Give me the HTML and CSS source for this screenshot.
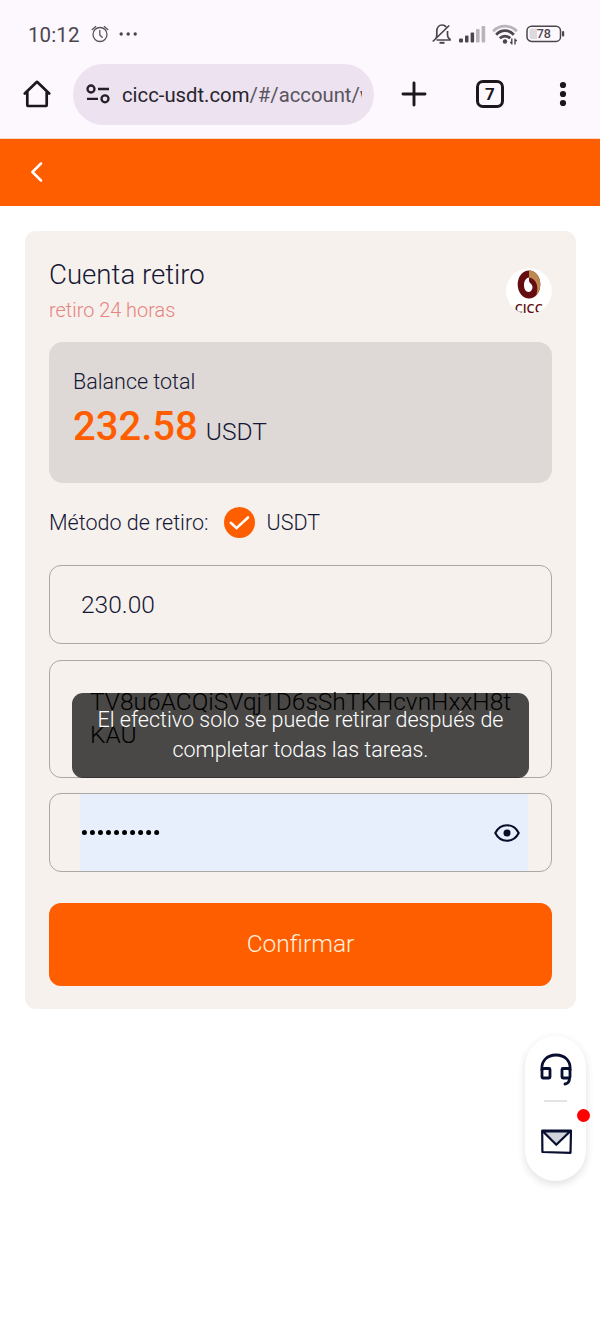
FILE: index.html
```html
<!DOCTYPE html>
<html lang="es">
<head>
<meta charset="utf-8">
<title>Cuenta retiro</title>
<link rel="stylesheet" href="styles.css">
</head>
<body>
<header class="chrome">
  <div class="status">
    <span class="clock">10:12</span>
    <svg class="alarm" width="18" height="18" viewBox="0 0 18 18" fill="none" stroke="#58535b" stroke-width="1.3"><circle cx="9" cy="9.5" r="7"/><path d="M8.8 5v5l2.8 2.8M.8 5 5 1.2M17.2 5 13 1.2"/></svg>
    <svg class="more" width="19" height="4" viewBox="0 0 19 4" fill="#4b464e"><circle cx="2.2" cy="2" r="1.7"/><circle cx="9.2" cy="2" r="1.7"/><circle cx="16.2" cy="2" r="1.7"/></svg>
    <div class="signals">
      <svg width="20" height="22" viewBox="0 0 20 22" fill="none" stroke="#4b464e" stroke-width="1.7"><path d="M3.5 16c1-1 1.300-2 1.300-4V8.500C4.800 4.500 7 2 10 2c2 0 3.300.8 4.200 2M15.500 8v4c0 2 .5 3 2.500 4.300v.7H4.500M.8 18.500 17.200 2.500"/><path d="M7.500 19.800h5" stroke-width="2"/></svg>
      <svg class="bars" width="27" height="18" viewBox="0 0 27 18"><g fill="#4b464e"><rect y="13.500" width="4" height="4" rx="1"/><rect x="6" y="10.500" width="3.500" height="7" rx="1"/><rect x="11.600" y="7.500" width="3.500" height="10" rx="1"/></g><g fill="#b9b3bb"><rect x="17" y="4" width="3.600" height="13.500" rx="1"/><rect x="22.600" y="1" width="3.600" height="16.500" rx="1"/></g></svg>
      <svg class="wifi" width="26" height="21" viewBox="0 0 26 21" fill="none" stroke-width="2.800"><path d="M1.200 7.300C7.500.5 18.500.5 24.800 7.300" stroke="#b9b3bb"/><path d="M4.200 10.700c5-5.400 12.600-5.400 17.600 0M7.800 14.300c3-3 7.400-3 10.400 0" stroke="#4b464e"/><circle cx="13" cy="17.500" r="2.200" fill="#4b464e"/><path d="M19.800 14.500v6M23 14.500v6M18 18.500h2M23 16.500h2" stroke="#4b464e" stroke-width="1.400"/></svg>
      <svg width="39" height="18" viewBox="0 0 39 18"><rect x="1" y="1.200" width="33.500" height="15.200" rx="4.500" fill="none" stroke="#4b464e" stroke-width="1.500"/><path d="M6 3.500h5v10.500H6q-2.500 0-2.500-2.500V6Q3.500 3.500 6 3.500z" fill="#ded8df"/><rect x="36" y="6" width="2.200" height="5.500" rx="1" fill="#4b464e"/><text x="17.800" y="13.200" text-anchor="middle" class="charge">78</text></svg>
    </div>
  </div>
  <div class="toolbar">
    <svg class="home" width="28" height="28" viewBox="0 0 28 28" fill="none" stroke="#1c171e" stroke-width="2.700" stroke-linejoin="round" stroke-linecap="round"><path d="M1.800 13.500 14 1.800l12.200 11.700M4.300 12v12.700q0 1.300 1.300 1.300h16.800q1.300 0 1.300-1.300V12"/></svg>
    <div class="address">
      <svg width="24" height="20" viewBox="0 0 24 20" fill="none" stroke="#252027" stroke-width="2.300"><circle cx="5" cy="5" r="3.500"/><path d="M12 5h11M1 14.800h11"/><circle cx="19" cy="14.800" r="3.500"/></svg>
      <div class="url">cicc-usdt.com<span class="path">/#/account/w</span></div>
    </div>
    <svg class="plus" width="26" height="26" viewBox="0 0 26 26" stroke="#1c171e" stroke-width="2.900" stroke-linecap="round"><path d="M13 2v22M2 13h22"/></svg>
    <div class="tabs">7</div>
    <svg class="dots" width="8" height="26" viewBox="0 0 8 26" fill="#1c171e"><circle cx="4" cy="4" r="3.100"/><circle cx="4" cy="13" r="3.100"/><circle cx="4" cy="22" r="3.100"/></svg>
  </div>
</header>
<nav class="navbar">
  <svg width="13" height="20" viewBox="0 0 13 20" fill="none" stroke="#fff" stroke-width="2.500" stroke-linecap="round" stroke-linejoin="round"><path d="M11 1.500 2.400 10l8.600 8.500"/></svg>
</nav>
<main class="card">
  <div class="heading">
    <div>
      <h1 class="title">Cuenta retiro</h1>
      <p class="subtitle">retiro 24 horas</p>
    </div>
    <svg class="logo" width="46" height="46" viewBox="0 0 46 46"><circle cx="23" cy="23" r="23" fill="#fff"/><ellipse cx="23" cy="16.500" rx="11.300" ry="14" fill="#650d10"/><path d="M23 2.500c6.500 0 11.300 6 11.300 14 0 4.500-1.500 8-4 10.500 2.500-8 .7-16-7.300-17.500z" fill="#bd8850"/><path d="M23 9.500v3.500c.5 2.500 3.500 3 3.500 6 0 2.800-1.800 5-4 5-2.800 0-4.500-3-4.500-7 0-4 2-7 5-7.500z" fill="#fff"/><text x="22.700" y="44.500" text-anchor="middle" textLength="28" lengthAdjust="spacingAndGlyphs" class="brand">CICC</text></svg>
  </div>
  <section class="balance">
    <div class="label">Balance total</div>
    <div class="amount"><strong>232.58</strong><span>USDT</span></div>
  </section>
  <div class="method">
    <span>Método de retiro:</span>
    <svg width="31" height="31" viewBox="0 0 31 31"><circle cx="15.500" cy="15.500" r="15.500" fill="#ff5e00"/><path d="m6.800 15.800 5.700 5.300L24 10.500" fill="none" stroke="#fff" stroke-width="2.600" stroke-linecap="round"/></svg>
    <span>USDT</span>
  </div>
  <div class="field sum">230.00</div>
  <div class="field wallet"><span class="wallet-text">TV8u6ACQiSVqj1D6sShTKHcvnHxxH8t<br>KAU</span>
    <div class="toast">El efectivo solo se puede retirar después de<br>completar todas las tareas.</div>
  </div>
  <div class="field password">
    <div class="autofill">
      <svg width="80" height="8" viewBox="0 0 80 8" fill="none"><path d="M4.400 3.500h73" stroke="#000" stroke-width="5" stroke-linecap="round" stroke-dasharray="0 8.030"/></svg>
      <svg width="26" height="18" viewBox="0 0 26 18" fill="none" stroke="#080c2b" stroke-width="2.100"><path d="M1.300 9C6.500-1.300 19.500-1.300 24.700 9 19.500 19.300 6.500 19.300 1.300 9z"/><circle cx="13" cy="9" r="3.500" fill="#080c2b" stroke="none"/></svg>
    </div>
  </div>
  <div class="confirm">Confirmar</div>
</main>
<aside class="support">
  <svg width="32" height="34" viewBox="0 0 32 34" fill="none" stroke="#080e30" stroke-width="2.800" stroke-linecap="round" stroke-linejoin="round"><path d="M2 17C1 8 7 2 16 2s15 6 14 15"/><rect x="2" y="15.500" width="8" height="9.500" rx="1"/><rect x="22" y="15.500" width="8" height="9.500" rx="1"/><path d="M29.500 25.500c0 3-1.500 5-4.500 5.500"/></svg>
  <i class="divider"></i>
  <svg width="32" height="25" viewBox="0 0 32 25" fill="none" stroke="#080e30" stroke-width="2.200" stroke-linejoin="round"><path d="M2.200 1.500 31 1.700 30.500 23.800 2.400 23z"/><path d="M3 2.500 16.300 15.800 30 2.500z" fill="#d1d2da"/></svg>
  <i class="unread"></i>
</aside>
</body>
</html>
```
FILE: styles.css
```css
* { box-sizing: border-box; }
body { margin: 0; background: #fff; color: #141735; font-family: Roboto, sans-serif; font-weight: 300; height: 1333px; overflow: hidden; }
svg { display: block; flex: none; }
h1, p { margin: 0; font-weight: 300; }
.chrome { height: 139px; background: #fdf7fe; padding-top: 20px; border-bottom: 1px solid #fbd6cb; }
.status { display: flex; align-items: center; height: 28px; padding: 0 35px 0 28px; color: #4b464e; }
.clock { padding-top: 1px; font-size: 20.5px; font-weight: 450; letter-spacing: .1px; width: 53px; }
.alarm { margin-left: 10px; }
.more { margin-left: 10px; }
.signals { display: flex; align-items: center; margin-left: auto; }
.bars { margin-left: 7px; }
.wifi { margin: 0 8px 0 6px; }
.charge { font: 500 12.5px Roboto, sans-serif; fill: #4b464e; }
.toolbar { display: flex; align-items: center; height: 60px; margin-top: 16px; padding: 0 33px 0 23px; }
.address { display: flex; align-items: center; width: 301px; height: 61px; margin-left: 22px; padding-left: 13px; border-radius: 31px; background: #ece2f0; }
.url { width: 240px; margin: 2px 0 0 12px; overflow: hidden; white-space: nowrap; color: #29242c; font-size: 20.3px; font-weight: 400; line-height: 30px; }
.path { color: #5a545e; }
.plus { margin-left: 27px; }
.tabs { width: 28px; height: 28px; margin-left: 49px; border: 3px solid #1c171e; border-radius: 7px; color: #1c171e; font-size: 17px; font-weight: 700; line-height: 23px; text-align: center; }
.dots { margin-left: auto; }
.navbar { display: flex; align-items: center; height: 67px; padding: 0 0 2px 30px; background: #ff5e00; }
.card { width: 551px; height: 778px; margin: 25px 0 0 25px; padding: 24px; border-radius: 11px; background: #f6f1ed; }
.heading { display: flex; justify-content: space-between; height: 87px; }
.title { font-size: 27.600px; line-height: 40px; }
.subtitle { color: #e8827f; font-size: 19.900px; line-height: 32px; }
.logo { margin-top: 13px; border-radius: 50%; overflow: hidden; }
.brand { font: 600 12.5px "Open Sans", sans-serif; fill: #650d10; }
.balance { height: 141px; padding: 24px; border-radius: 14px; background: #ded9d6; }
.label { font-size: 21.500px; line-height: 32px; }
.amount { display: flex; align-items: baseline; gap: 8px; font-size: 24.500px; line-height: 58px; }
.amount strong { color: #ff5e00; font-size: 40px; font-weight: 500; }
.method { display: flex; align-items: center; height: 31px; margin: 24px 0 27px; font-size: 21.500px; }
.method svg { margin: 0 12px 0 15px; }
.field { height: 79px; border: 1px solid #aaa7a5; border-radius: 12px; font-size: 24.500px; }
.sum { padding-left: 31px; line-height: 78px; }
.wallet { position: relative; height: 118px; margin: 16px 0 15px; padding: 24px 0 0 40px; color: #000; line-height: 33px; }
.toast { position: absolute; left: 22px; top: 32px; width: 457px; height: 85px; padding-top: 12px; border-radius: 11px; background: rgba(0, 0, 0, .7); color: #fff; font-size: 21.500px; line-height: 30px; text-align: center; white-space: nowrap; }
.password { padding: 0 23px 0 30px; }
.autofill { display: flex; align-items: center; justify-content: space-between; height: 77px; padding-right: 8px; background: #e7effd; }
.confirm { height: 83px; margin-top: 31px; border-radius: 12px; background: #ff5e00; color: #fff0dc; font-size: 24.500px; line-height: 82px; text-align: center; }
.support { position: absolute; left: 525px; top: 1036px; display: flex; flex-direction: column; align-items: center; width: 61px; height: 145px; padding-top: 17px; border-radius: 31px; background: #fff; box-shadow: 0 3px 9px rgba(0, 0, 0, .13); }
.divider { width: 23px; height: 2px; margin: 13px 0 27px; background: #e4e4e6; }
.unread { position: absolute; right: -4px; top: 73px; width: 13px; height: 13px; border-radius: 50%; background: #f00; }
```
